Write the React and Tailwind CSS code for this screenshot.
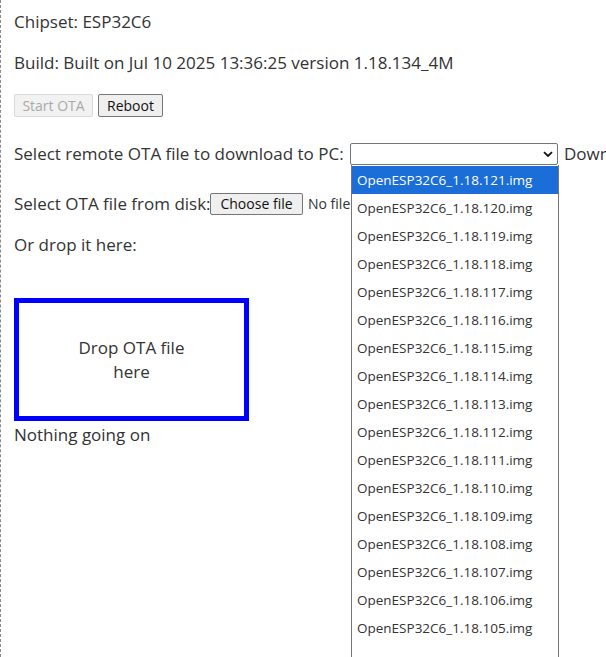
import React from "react";

const items = [121,120,119,118,117,116,115,114,113,112,111,110,109,108,107,106,105];
const font = { fontFamily: '"Open Sans", "Noto Sans", sans-serif' };

export default function App() {
  return (
    <div className="relative w-[606px] h-[657px] overflow-hidden bg-white text-[#333] border-l border-dashed border-[#8a8a8a]" style={font}>
      <div className="pl-[13px] text-[17px] leading-[24px]">
        <div className="pt-[10px] h-[51px]">Chipset: ESP32C6</div>
        <div className="h-[43px]">Build: Built on Jul 10 2025 13:36:25 version 1.18.134_4M</div>
        <div className="flex gap-[5px] text-[14px] leading-[18px]">
          <button className="w-[79px] h-[23px] border border-[#d9d9d9] bg-[#f2f2f2] text-[#a9a9a9] rounded-[2px]">Start OTA</button>
          <button className="w-[65px] h-[23px] border border-[#767676] bg-[#efefef] text-[#111] rounded-[2px]">Reboot</button>
        </div>
        <div className="flex items-center mt-[26px] h-[22px] whitespace-nowrap">
          <span className="w-[336px] shrink-0">Select remote OTA file to download to PC:</span>
          <div className="shrink-0 w-[208px] h-[22px] border border-[#767676] rounded-[2px] bg-white flex items-center justify-end pr-[4px]">
            <svg width="10" height="7" viewBox="0 0 10 7"><path d="M1 1.2 L5 5 L9 1.2" fill="none" stroke="#111" strokeWidth="1.8"/></svg>
          </div>
          <span className="ml-[6px] shrink-0">Download</span>
        </div>
        <div className="flex items-center mt-[28px] h-[21px] whitespace-nowrap">
          <span className="w-[196px] shrink-0">Select OTA file from disk:</span>
          <button className="shrink-0 w-[93px] h-[22px] border border-[#767676] bg-[#efefef] text-[#111] text-[14px] leading-[18px] rounded-[2px]">Choose file</button>
          <span className="ml-[5px] text-[14px] shrink-0">No file chosen</span>
        </div>
        <div className="mt-[19px] h-[24px]">Or drop it here:</div>
        <div className="mt-[41px] w-[235px] h-[123px] border-[5px] border-[#0000ff] flex items-center justify-center text-center">
          <div className="w-[130px] pt-[1px]">Drop OTA file here</div>
        </div>
        <div className="mt-[2px]">Nothing going on</div>
      </div>
      <div className="absolute left-[350px] top-[165px] w-[208px] h-[500px] border border-t-0 border-[#767676] bg-white text-[13.5px]" style={font}>
        <div className="pt-[1px]">
          {items.map((n, i) => (
            <div key={n} className={"h-[28px] pl-[5px] flex items-center " + (i === 0 ? "bg-[#1b6dd7] text-white" : "text-[#333]")}>
              OpenESP32C6_1.18.{n}.img
            </div>
          ))}
        </div>
      </div>
    </div>
  );
}
